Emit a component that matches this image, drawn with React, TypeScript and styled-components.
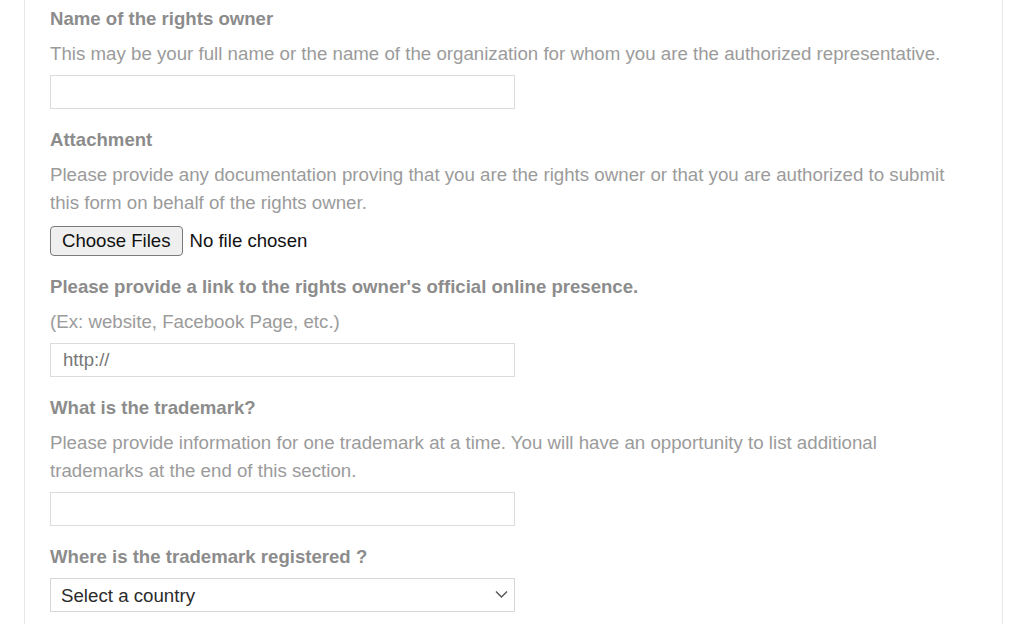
import * as React from "react";
import styled, { createGlobalStyle } from "styled-components";

const GlobalStyle = createGlobalStyle`
  html, body {
    margin: 0;
    padding: 0;
    background: #ffffff;
  }
  body {
    font-family: "Liberation Sans", Arial, Helvetica, sans-serif;
  }
`;

const Page = styled.div`
  padding: 0 21px 0 24px;
  height: 624px;
  overflow: hidden;
`;

const Panel = styled.form`
  border-left: 1px solid #e6e6e6;
  border-right: 1px solid #e6e6e6;
  padding: 7px 25px 40px 25px;
  min-height: 624px;
  box-sizing: border-box;
  display: flex;
  flex-direction: column;
  gap: 19px;
`;

const Field = styled.div`
  display: flex;
  flex-direction: column;
  align-items: flex-start;
`;

const Label = styled.label`
  font-size: 18.6px;
  line-height: 24px;
  font-weight: 700;
  color: #8c8c8c;
  margin-bottom: 9px;
`;

const Help = styled.p<{ $gap?: number }>`
  margin: 0 0 ${(p) => p.$gap ?? 7}px 0;
  font-size: 18.7px;
  line-height: 28px;
  color: #9b9b9b;
`;

const TextInput = styled.input`
  box-sizing: border-box;
  width: 465px;
  height: 34px;
  border: 1px solid #dcdcdc;
  border-radius: 0;
  padding: 0 12px;
  font-family: inherit;
  font-size: 18.6px;
  color: #777777;
  background: #fff;
  outline: none;
`;

const FileRow = styled.div`
  display: flex;
  align-items: center;
  gap: 7px;
  margin-top: 1px;
`;

const FileButton = styled.button`
  box-sizing: border-box;
  height: 30px;
  padding: 0 11px;
  border: 1px solid #7a7a7a;
  border-radius: 4px;
  background: #efefef;
  font-family: inherit;
  font-size: 18.6px;
  color: #111;
  cursor: pointer;
`;

const FileStatus = styled.span`
  font-size: 18.6px;
  color: #111;
`;

const SelectWrap = styled.div`
  position: relative;
  width: 465px;
`;

const Select = styled.select`
  box-sizing: border-box;
  width: 100%;
  height: 34px;
  border: 1px solid #d6d6d6;
  border-radius: 0;
  padding: 0 30px 0 10px;
  font-family: inherit;
  font-size: 18.7px;
  color: #2b2b2b;
  background: #fff;
  appearance: none;
  -webkit-appearance: none;
  outline: none;
`;

const Chevron = styled.svg`
  position: absolute;
  right: 7px;
  top: 12px;
  width: 13px;
  height: 9px;
  pointer-events: none;
`;

export default function App() {
  const fileRef = React.useRef<HTMLInputElement>(null);
  const [fileText, setFileText] = React.useState("No file chosen");

  return (
    <>
      <GlobalStyle />
      <Page>
        <Panel onSubmit={(e) => e.preventDefault()}>
          <Field>
            <Label htmlFor="owner">Name of the rights owner</Label>
            <Help $gap={7}>
              This may be your full name or the name of the organization for
              whom you are the authorized representative.
            </Help>
            <TextInput id="owner" type="text" />
          </Field>

          <Field>
            <Label>Attachment</Label>
            <Help $gap={8}>
              Please provide any documentation proving that you are the rights
              owner or that you are authorized to submit
              <br />
              this form on behalf of the rights owner.
            </Help>
            <FileRow>
              <FileButton type="button" onClick={() => fileRef.current?.click()}>
                Choose Files
              </FileButton>
              <FileStatus>{fileText}</FileStatus>
              <input
                ref={fileRef}
                type="file"
                multiple
                hidden
                onChange={(e) => {
                  const n = e.target.files?.length ?? 0;
                  setFileText(n === 0 ? "No file chosen" : n === 1 ? e.target.files![0].name : `${n} files`);
                }}
              />
            </FileRow>
          </Field>

          <Field>
            <Label htmlFor="link">
              Please provide a link to the rights owner's official online
              presence.
            </Label>
            <Help $gap={7}>(Ex: website, Facebook Page, etc.)</Help>
            <TextInput id="link" type="text" defaultValue="http://" />
          </Field>

          <Field>
            <Label htmlFor="mark">What is the trademark?</Label>
            <Help $gap={7}>
              Please provide information for one trademark at a time. You will
              have an opportunity to list additional
              <br />
              trademarks at the end of this section.
            </Help>
            <TextInput id="mark" type="text" />
          </Field>

          <Field>
            <Label htmlFor="country">Where is the trademark registered ?</Label>
            <SelectWrap>
              <Select id="country" defaultValue="">
                <option value="">Select a country</option>
                <option value="us">United States</option>
                <option value="gb">United Kingdom</option>
                <option value="de">Germany</option>
              </Select>
              <Chevron viewBox="0 0 13 9">
                <polyline
                  points="1,1.5 6.5,7 12,1.5"
                  fill="none"
                  stroke="#555"
                  strokeWidth="1.4"
                />
              </Chevron>
            </SelectWrap>
          </Field>
        </Panel>
      </Page>
    </>
  );
}
